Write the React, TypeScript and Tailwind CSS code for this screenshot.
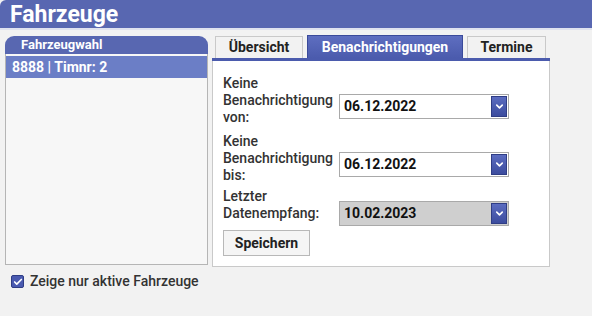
import { Check, ChevronDown } from 'lucide-react'

const font = { fontFamily: 'Roboto, "Liberation Sans", sans-serif' }

function DateSelect({ value, disabled }: { value: string; disabled?: boolean }) {
  return (
    <div
      className={`flex h-[25px] w-[170px] items-center justify-between border border-[#a9a9a9] pl-[4px] pr-[1px] ${
        disabled ? 'bg-[#cfcfcf]' : 'bg-white'
      }`}
    >
      <span className="text-[14px] font-bold text-[#111]">{value}</span>
      <span className="flex h-[21px] w-[16px] items-center justify-center border border-[#2f3d85] bg-gradient-to-b from-[#5b6cc0] to-[#3c4c9e]">
        <ChevronDown className="h-[11px] w-[11px] text-white" strokeWidth={3.5} />
      </span>
    </div>
  )
}

function Field({ label, value, offset, disabled }: { label: string[]; value: string; offset: string; disabled?: boolean }) {
  return (
    <div className="flex items-start">
      <div className="w-[116px] text-[14px] font-medium leading-[17px] text-[#333]">
        {label.map((l) => (
          <div key={l}>{l}</div>
        ))}
      </div>
      <div className={offset}>
        <DateSelect value={value} disabled={disabled} />
      </div>
    </div>
  )
}

export default function App() {
  return (
    <div className="h-[316px] w-[592px] overflow-hidden bg-[#f2f2f2]" style={font}>
      <div className="flex h-[30px] items-center rounded-tl-[6px] border-b-2 border-[#dfe2ef] bg-[#5867b1] pl-[10px]">
        <h1 className="text-[23px] font-bold leading-none text-white">Fahrzeuge</h1>
      </div>

      <div className="flex pt-[5px]">
        <div className="ml-[5px] mt-[1px] w-[203px]">
          <div className="flex h-[18px] items-center rounded-t-[9px] bg-[#5867b1] pl-[16px] text-[13px] font-bold text-white">
            Fahrzeugwahl
          </div>
          <div className="h-[211px] border border-t-0 border-[#b5b5b5] bg-[#f7f7f7] pt-[2px]">
            <div className="flex h-[22px] items-center bg-[#6b7ec6] pl-[6px] text-[14px] font-bold text-white">
              8888 | Timnr: 2
            </div>
          </div>
          <label className="mt-[6px] flex items-center gap-[6px] pl-[6px] text-[14px] font-medium text-[#333]">
            <span className="flex h-[13px] w-[13px] items-center justify-center rounded-[2px] border border-[#2f3d85] bg-[#4a5ab0]">
              <Check className="h-[10px] w-[10px] text-white" strokeWidth={4} />
            </span>
            Zeige nur aktive Fahrzeuge
          </label>
        </div>

        <div className="ml-[4px] w-[338px]">
          <div className="flex items-end gap-[4px] pl-[3px]">
            <div className="flex h-[22px] w-[88px] items-center justify-center border border-b-0 border-[#c9c9c9] bg-[#f2f2f2] text-[14px] font-bold text-[#222]">
              Übersicht
            </div>
            <div className="flex h-[23px] w-[156px] items-center justify-center border border-b-0 border-[#3a4a9a] bg-gradient-to-b from-[#5e6ec0] to-[#4b5bad] text-[14px] font-bold text-white">
              Benachrichtigungen
            </div>
            <div className="flex h-[22px] w-[79px] items-center justify-center border border-b-0 border-[#c9c9c9] bg-[#f2f2f2] text-[14px] font-bold text-[#222]">
              Termine
            </div>
          </div>
          <div className="h-[3px] bg-[#4b5bad]" />
          <div className="flex h-[206px] flex-col border border-t-0 border-[#c9c9c9] bg-white pl-[10px] pt-[14px]">
            <Field label={['Keine', 'Benachrichtigung', 'von:']} value="06.12.2022" offset="mt-[19px]" />
            <div className="h-[7px]" />
            <Field label={['Keine', 'Benachrichtigung', 'bis:']} value="06.12.2022" offset="mt-[19px]" />
            <div className="h-[4px]" />
            <Field label={['Letzter', 'Datenempfang:']} value="10.02.2023" offset="mt-[13px]" disabled />
            <button className="mt-[4px] h-[26px] w-[87px] border border-[#b8b8b8] bg-[#f5f5f5] text-[14px] font-bold text-[#222]">
              Speichern
            </button>
          </div>
        </div>
      </div>
    </div>
  )
}
